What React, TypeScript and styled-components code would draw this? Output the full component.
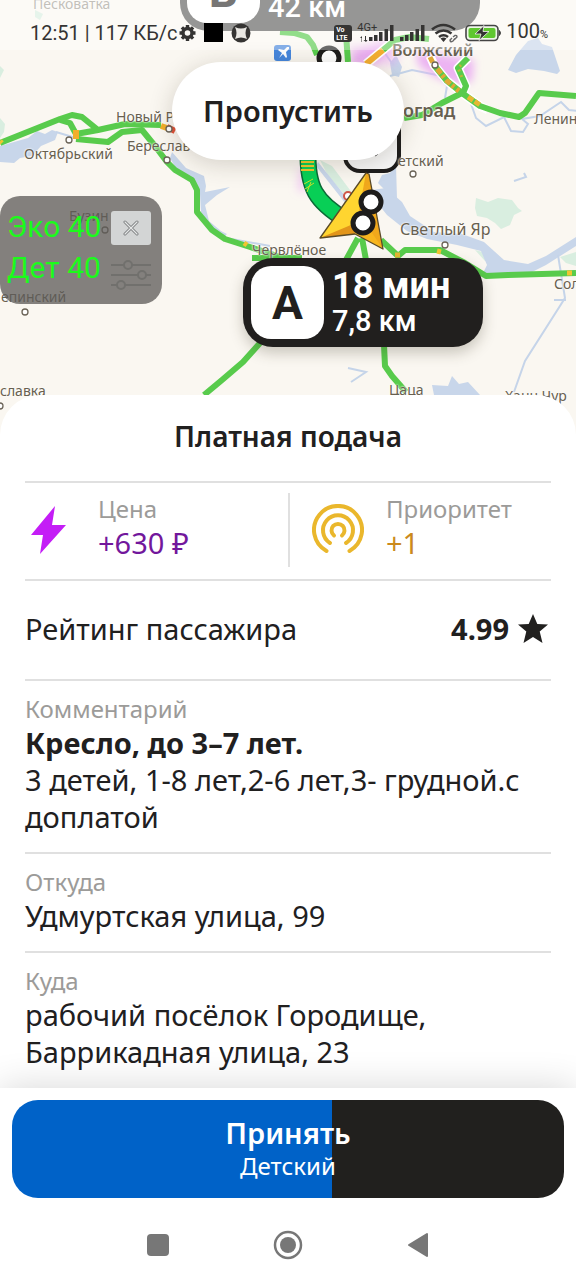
import React from "react";
import styled, { createGlobalStyle } from "styled-components";

const GlobalStyle = createGlobalStyle`
  * { box-sizing: border-box; }
  body { margin: 0; background: #fff; color: #21201f; font-family: "Noto Sans", sans-serif; }
  button { border: 0; margin: 0; padding: 0; background: none; font: inherit; color: inherit; cursor: pointer; }
  h1, p, dl, dt, dd { margin: 0; font-weight: 400; }
  svg { display: block; }
`;

const Screen = styled.main`
  display: flex;
  flex-direction: column;
  min-height: 100vh;
  overflow: hidden;
`;

/* ---------- map ---------- */

const MapArea = styled.section`
  position: relative;
  height: 395px;
`;

const MapDrawing = styled.svg`
  position: absolute;
  top: 0;
  left: 0;
  width: 100%;
  height: 440px;
`;

const Place = styled.span<{ $x: number; $y: number; $size?: number; $bold?: boolean; $color?: string }>`
  position: absolute;
  left: ${(p) => p.$x}px;
  top: ${(p) => p.$y}px;
  font-size: ${(p) => p.$size ?? 14}px;
  line-height: 18px;
  font-weight: ${(p) => (p.$bold ? 600 : 400)};
  color: ${(p) => p.$color ?? "#68604f"};
  white-space: nowrap;
  text-shadow: 0 0 2px #fff, 0 0 2px #fff;
`;

const StatusBar = styled.header`
  position: absolute;
  inset: 0 0 auto;
  display: flex;
  justify-content: space-between;
  align-items: center;
  height: 50px;
  padding: 16px 28px 0 30px;
  background: rgba(255, 255, 255, 0.35);
  color: #353433;
  font: 400 20px/24px Roboto, sans-serif;
`;

const StatusGroup = styled.div<{ $gap: number }>`
  display: flex;
  align-items: center;
  gap: ${(p) => p.$gap}px;
`;

const Percent = styled.small`
  font-size: 11px;
`;

const FarMarker = styled.div`
  position: absolute;
  left: 180px;
  top: -58px;
  display: flex;
  align-items: center;
  gap: 8px;
  width: 300px;
  height: 89px;
  padding: 0 7px;
  border-radius: 28px;
  background: #5f5e5c;
`;

const FarLetter = styled.span`
  display: flex;
  align-items: flex-end;
  justify-content: center;
  width: 73px;
  height: 73px;
  padding-bottom: 9px;
  border-radius: 20px;
  background: #fff;
  color: #2e2d2c;
  font: 700 46px/46px Roboto, sans-serif;
`;

const FarDistance = styled.span`
  align-self: flex-end;
  color: #fff;
  font: 500 29px/32px Roboto, sans-serif;
  padding-bottom: 8px;
`;

const SkipButton = styled.button`
  position: absolute;
  top: 62px;
  left: 50%;
  width: 232px;
  height: 98px;
  padding-bottom: 2px;
  transform: translateX(-50%);
  border-radius: 49px;
  background: #fff;
  box-shadow: 0 4px 24px rgba(60, 50, 30, 0.2);
  font-size: 29px;
  font-weight: 600;
`;

const Widget = styled.aside`
  position: absolute;
  left: 0;
  top: 196px;
  display: flex;
  justify-content: space-between;
  width: 162px;
  height: 108px;
  padding: 10px 11px 8px 7px;
  border-radius: 20px;
  background: rgba(93, 91, 88, 0.76);
`;

const WidgetText = styled.div`
  color: #1bfb1b;
  font: 400 30px/41px Roboto, sans-serif;
  white-space: nowrap;
`;

const WidgetTools = styled.div`
  display: flex;
  flex-direction: column;
  gap: 14px;
  padding-top: 5px;
`;

const CloseButton = styled.button`
  display: grid;
  place-items: center;
  width: 40px;
  height: 34px;
  border-radius: 3px;
  background: #d3d5d5;
`;

const NearMarker = styled.div`
  position: absolute;
  left: 243px;
  top: 258px;
  display: flex;
  align-items: center;
  gap: 8px;
  width: 240px;
  height: 89px;
  padding: 0 8px;
  border-radius: 30px;
  background: #211f1e;
  box-shadow: 0 6px 14px rgba(60, 50, 30, 0.25);
  color: #fff;
  font-family: Roboto, sans-serif;
`;

const NearLetter = styled.span`
  display: grid;
  place-items: center;
  width: 73px;
  height: 73px;
  border-radius: 20px;
  background: #fff;
  color: #211f1e;
  font-size: 46px;
  font-weight: 700;
`;

const Eta = styled.div`
  font-size: 36px;
  font-weight: 700;
  line-height: 36px;
`;

const Distance = styled.div`
  font-size: 29px;
  font-weight: 500;
  line-height: 34px;
`;

/* ---------- order sheet ---------- */

const Sheet = styled.section`
  position: relative;
  flex: 1;
  padding: 0 25px;
  border-radius: 40px 40px 0 0;
  background: #fff;
`;

const Title = styled.h1`
  padding: 21px 0 25px;
  font-size: 28px;
  font-weight: 600;
  line-height: 40px;
  text-align: center;
`;

const Bonuses = styled.dl`
  display: grid;
  grid-template-columns: 1fr 1fr;
  padding: 10px 0 12px;
  border-top: 2px solid #e0e0e0;
`;

const Bonus = styled.div<{ $divided?: boolean }>`
  display: grid;
  grid-template-columns: 52px 1fr;
  column-gap: ${(p) => (p.$divided ? 22 : 21)}px;
  align-items: center;
  height: 74px;
  padding-left: ${(p) => (p.$divided ? 22 : 0)}px;
  border-left: ${(p) => (p.$divided ? "2px solid #e0e0e0" : "0")};
`;

const BonusText = styled.div`
  padding-bottom: 5px;
`;

const Label = styled.dt`
  color: #9c9b99;
  font-size: 24px;
  line-height: 30px;
`;

const BonusValue = styled.dd<{ $color: string }>`
  color: ${(p) => p.$color};
  font-size: 29px;
  line-height: 37px;
`;

const Rating = styled.div`
  display: flex;
  align-items: center;
  justify-content: space-between;
  height: 100px;
  padding: 0 2px 4px 0;
  border-top: 2px solid #e0e0e0;
  font-size: 29px;
`;

const Score = styled.strong`
  display: flex;
  align-items: center;
  gap: 8px;
  font-weight: 700;
`;

const Detail = styled.dl`
  padding: 13px 0 17px;
  border-top: 2px solid #e0e0e0;
`;

const DetailText = styled.dd<{ $strong?: boolean }>`
  font-size: 29px;
  font-weight: ${(p) => (p.$strong ? 700 : 400)};
  line-height: 37px;
`;

const Footer = styled.footer`
  position: relative;
  padding: 12px 12px 0;
  background: #fff;
  box-shadow: 0 0 36px rgba(0, 0, 0, 0.16);
`;

const AcceptButton = styled.button`
  display: flex;
  flex-direction: column;
  align-items: center;
  justify-content: center;
  width: 100%;
  height: 98px;
  border-radius: 26px;
  background: linear-gradient(to right, #0062c8 58%, #21201e 58%);
  color: #fff;
`;

const AcceptTitle = styled.span`
  font-size: 29px;
  font-weight: 600;
  line-height: 34px;
`;

const AcceptTariff = styled.span`
  font-size: 24px;
  line-height: 32px;
`;

const SystemNav = styled.nav`
  display: flex;
  justify-content: center;
  gap: 82px;
  padding: 23px 0 11px;
`;

const NavButton = styled.button`
  display: grid;
  place-items: center;
  width: 48px;
  height: 48px;
`;

/* ---------- drawings ---------- */

function Town({ x, y }: { x: number; y: number }) {
  return <circle cx={x} cy={y} r="3" fill="#fff" stroke="#6b6458" strokeWidth="1.3" />;
}

function RegionMap() {
  return (
    <MapDrawing viewBox="0 0 576 440" preserveAspectRatio="xMinYMin slice" aria-hidden="true">
      <defs>
        <filter id="soft" x="-30%" y="-30%" width="160%" height="160%"><feGaussianBlur stdDeviation="4" /></filter>
      </defs>
      <rect width="576" height="440" fill="#faf7f1" />

      <g fill="#d9eee0">
        <path d="M0 66l4 4-4 8zM0 118l5 6-1 8-4 6zM35 10l8 4-3 6-5-3zM476 198l12 4 10-4 14 2 6 8 4 3-8 4-4 10-9 4-6-6-8-5-10-2-2-8z" />
        <path d="M560 257l16-5v14l-10-3zM475 250l20 5-10 6zM320 160l12 6 24 32-10-2-18-20z" />
      </g>

      <g fill="#c8d6ea">
        <path d="M0 146l28-8 9-7 8 3 7-4 6 2-3 8-14 6-9 10-12 2-6 5-14-1z" />
        <path d="M172 152l14 16 18 8 2 10-1 6 25-5-13 8-12 10 4 16 12 10 6 3-2 2-14-9-10-15-1-18-8-12-14-10-8-14z" />
        <path d="M516 55l12-14 10-3 4 6 10 3 8 24-3 3-13-3-16-2-12 4-8-3z" />
        <path d="M372 190l14-2 16 14 8 14 24 16 28 2 22 8 20 18 24 4 18-8 30-19v9l-30 19-20 10-18-2-14 4-12-2 5-10-6-14-24-6-30-6-20-8-20-16-16-20z" />
        <path d="M396 165l1 34-7-4-12-12 4-8 8-2zM318 162l-2 4 30 38 4-2z" />
        <path d="M432 385l16 1 4-10 7 8 9-2 12 13h-46z" />
        <path d="M396 55l6 12-3 10-7-2-2-12z" />
      </g>
      <g fill="none" stroke="#c5d4e9" strokeWidth="2">
        <path d="M384 52l10 14M390 76l22-6 30 6M440 78l7 8-2 12M470 101l6 17 10 8 18-9 7 14 12 1 5-8-6-5 18-3 21-14 8 8 17 2" />
        <path d="M56 132l20 6M226 238l44 8M558 255l7 43-40 63-11 31M554 300h12M348 368l18 4-15 10M514 181l12-4-2-4" />
      </g>

      <g filter="url(#soft)" fill="#e9a2f2">
        <path d="M350 55l30-14 10 4-12 18-26 6zM416 50l58 10-2 22-20 2-20-9-14-10z" opacity=".8" />
        <path d="M300 165l10 10-5 18-8-3zM345 45h60l-10 20h-30z" opacity=".45" />
      </g>

      <g fill="none" stroke="#fff" strokeWidth="9" strokeLinejoin="round">
        <path d="M366 64l17-14 12-10M430 56l4 9 13 16 15 12 18 13 8 4M468 58l-10 10 8 18-3 7" />
      </g>
      <g fill="none" stroke="#58cb4c" strokeWidth="6" strokeLinejoin="round">
        <path d="M0 143l60-24 12-4 10 2 16 13 27-6 36 1" />
        <path d="M60 120l10 3 6 11 22-4M76 139l32 3 14-10 20-2 13 16 12 16 8 8 17 10 5 10v22l15 18 13 9 25 8 45 15" />
        <path d="M260 343l-17 19-21 18-18 15M384 345l1 21 7 10 14 16M358 238l-12 22M362 238l4 22M381 240l17 16 7-6h35l25 13 21 13 22-1 68-2" />
        <path d="M280 32l14 1 13 4 6 8 4 10M348 62l-2-28 6-16M383 50l12-10 14-3 20 2M468 58l-10 10 8 18-3 7M404 118l18-3 20-12 20-10M434 65l13 16 15 12 18 13 20 7 19 4 6-4 14-20 37 3" />
        <path d="M252 258h50" />
      </g>
      <g fill="none" strokeWidth="5">
        <path d="M76 130v9M161 126l6 2" stroke="#f2ae2a" strokeWidth="6" />
        <path d="M167 127l8 4" stroke="#df5138" strokeWidth="6" />
        <path d="M366 64l17-14" stroke="#f3ae31" strokeWidth="6" />
        <path d="M430 57l4 8 13 16 12 10" stroke="#dfa836" strokeDasharray="6 2 3 3" />
        <path d="M468 97l12 8M395 255h5" stroke="#e5b833" strokeDasharray="6 2" />
        <path d="M461 65l-3 3 5 12" stroke="#b9b93a" strokeWidth="3" strokeDasharray="2 4" />
        <path d="M0 141l2 2M244 243l3 2M437 251l4 1M567 273h5" stroke="#f0c531" />
      </g>

      <g fill="none" strokeLinejoin="round">
        <path d="M308 150c-1 38 8 52 38 70" stroke="#0b6a36" strokeWidth="17" />
        <path d="M308 150c-1 38 8 52 38 70" stroke="#08cf56" strokeWidth="14" />
        <path d="M301 162h13M301 166h13M301 170h13" stroke="#f2c62a" strokeWidth="2" />
        <path d="M304 184l9-5M305 189l9-6M307 192l4-10" stroke="#c9df2a" strokeWidth="1" />
      </g>

      <Town x={69} y={140} />
      <Town x={169} y={129} />
      <Town x={167} y={160} />
      <Town x={105} y={230} />
      <Town x={25} y={312} />
      <Town x={413} y={174} />
      <Town x={445} y={245} />
      <Town x={435} y={65} />
      <Town x={0} y={406} />

      <rect x="274" y="45" width="17" height="16" rx="3" fill="#4586dd" />
      <path d="M279 58l3-5-4-3 1-1 5 1 3-3 2 0 0 2-3 3 1 5-1 1-3-4-3 3z" fill="#fff" />

      <circle cx="329" cy="58" r="10" fill="#fff" stroke="#1d1c1b" strokeWidth="5" />
      <rect x="345" y="108" width="54" height="63" rx="15" fill="#f6f6f6" stroke="#1d1c1b" strokeWidth="4" />
      <path d="M374 154h4l-3 2" fill="#222" stroke="#222" />
      <circle cx="348" cy="196" r="4" fill="#fff" stroke="#cf5548" strokeWidth="2" />
    </MapDrawing>
  );
}

const CarLayer = styled.svg`
  position: absolute;
  left: 316px;
  top: 168px;
`;

function Car() {
  return (
    <CarLayer width="72" height="86" viewBox="316 168 72 86" aria-hidden="true">
      <path d="M366 173l-46 65 32-4 16-32z" fill="#ffd530" />
      <path d="M320 238l38-16-3 12z" fill="#e2951a" />
      <path d="M366 173l3 1 14 75-28-16z" fill="#f0a81c" />
      <path d="M354 233l14-6 15 22z" fill="#f8b61e" />
      <path d="M366 173l-46 65 35-4 28 15-14-75z" fill="none" stroke="#5a4a27" strokeWidth="1.3" strokeLinejoin="round" />
      <circle cx="371" cy="202" r="10" fill="#fff" stroke="#1d1c1b" strokeWidth="5" />
      <circle cx="363" cy="223" r="10" fill="#fff" stroke="#1d1c1b" strokeWidth="5" />
    </CarLayer>
  );
}

function StatusLeftIcons() {
  return (
    <svg width="72" height="20" viewBox="0 0 72 20" aria-hidden="true">
      <g stroke="#353433" fill="none">
        <circle cx="8.500" cy="10" r="4.500" strokeWidth="3.400" />
        <path d="M8.500 2v3M8.500 15v3M.5 10h3M13.500 10h3M2.900 4.400l2 2M12.100 13.600l2 2M14.100 4.400l-2 2M4.900 13.600l-2 2" strokeWidth="3.400" />
      </g>
      <path d="M25 0h19v19H25z" fill="#000" />
      <circle cx="62" cy="10" r="9.500" fill="#353433" />
      <path d="M56 4q6 3 12 0-3 6 0 12-6-3-12 0 3-6 0-12z" fill="#e9e7e3" />
    </svg>
  );
}

function Bars() {
  return (
    <svg width="25" height="18" viewBox="0 0 25 18" aria-hidden="true">
      <path d="M0 13h3.500v4H0zM5 11h3.500v6H5zM10 8h3.500v9H10zM15.500 5H19v12h-3.500zM21 1h3.500v16H21z" fill="#353433" />
    </svg>
  );
}

function DataArrows() {
  return (
    <svg width="9" height="6" viewBox="0 0 9 6" aria-hidden="true">
      <path d="M2.500 6V2H1l2-2v6zM6 0v4H4.500L7 6l1.500-2H7V0z" fill="#353433" />
    </svg>
  );
}

const Network = styled.div`
  display: flex;
  align-items: flex-end;
  gap: 1px;
  position: relative;
  padding-left: 3px;
`;

const NetworkType = styled.span`
  position: absolute;
  left: 1px;
  top: -2px;
  font: 400 11px/11px Roboto, sans-serif;
`;

const Volte = styled.span`
  width: 18px;
  height: 17px;
  padding: 1px 1px 0 2px;
  border-radius: 3px;
  background: #353433;
  color: #fff;
  font: 700 7px/8px Roboto, sans-serif;
`;

function Wifi() {
  return (
    <svg width="28" height="20" viewBox="0 0 28 20" aria-hidden="true">
      <g fill="none" stroke="#353433" strokeWidth="2.600">
        <path d="M1 6.500q11-9 23 0M4.500 10.500q8-6 16 0M8 14q4.500-3.500 9 0" />
      </g>
      <path d="M9.500 15.500q3-2 6 0l-3 3.500z" fill="#353433" />
      <path d="M20 17.500l-1 1M22 14l2-1.500q2-.5 2 1.500l-2.500 2.500M24 15.500l-2 2.500q-3 2-3-1l2-2" fill="none" stroke="#666" strokeWidth="1.400" />
    </svg>
  );
}

function Battery() {
  return (
    <svg width="38" height="18" viewBox="0 0 38 18" aria-hidden="true">
      <rect x="1" y="1.500" width="32" height="15" rx="4" fill="#eef6e8" stroke="#444" strokeWidth="1.600" />
      <rect x="3.500" y="4" width="27" height="10" rx="2" fill="#5fc72f" />
      <path d="M34.500 6.500q2 2.500 0 5z" fill="#444" stroke="#444" />
      <path d="M19 1.500l-9 8.500h6l-2 6.500 10-9h-6z" fill="#353433" stroke="#f4f4f0" strokeWidth=".8" />
    </svg>
  );
}

function CloseCross() {
  return (
    <svg width="16" height="16" viewBox="0 0 16 16" aria-hidden="true">
      <path d="M2 2l12 12M14 2L2 14" stroke="#77797a" strokeWidth="3" strokeLinecap="round" />
      <path d="M2 2l12 12M14 2L2 14" stroke="#e6e8e8" strokeWidth="1.300" strokeLinecap="round" />
    </svg>
  );
}

function Sliders() {
  return (
    <svg width="40" height="32" viewBox="0 0 40 32" fill="none" stroke="#71706d" strokeWidth="2" aria-hidden="true">
      <path d="M0 6h13M21 6h19M0 16h27M35 16h5M0 26h6M14 26h26" />
      <circle cx="17" cy="6" r="4" /><circle cx="31" cy="16" r="4" /><circle cx="10" cy="26" r="4" />
    </svg>
  );
}

function Bolt() {
  return (
    <svg width="52" height="52" viewBox="0 0 52 52" aria-hidden="true">
      <path d="M30 2L6 31h12l-3 19 26-29H27z" fill="#c41df6" />
    </svg>
  );
}

function Waves() {
  return (
    <svg width="52" height="52" viewBox="0 0 52 52" fill="none" stroke="#eab72c" strokeWidth="4" strokeLinecap="round" aria-hidden="true">
      <path d="M14.500 47a24 24 0 1 1 23 0" />
      <path d="M18 39a15 15 0 1 1 16 0" />
      <path d="M22 31.500a6.500 6.500 0 1 1 8 0" />
    </svg>
  );
}

function Star() {
  return (
    <svg width="32" height="32" viewBox="0 0 32 32" aria-hidden="true">
      <path d="M16 2l4.300 10L31 12.500l-8.300 7L25.500 31 16 25 6.500 31l2.800-11.500L1 12.500l10.700-.5z" fill="#21201f" />
    </svg>
  );
}

const details = [
  { label: "Комментарий", strong: "Кресло, до 3–7 лет.", text: "3 детей, 1-8 лет,2-6 лет,3- грудной.с доплатой" },
  { label: "Откуда", text: "Удмуртская улица, 99" },
  { label: "Куда", text: "рабочий посёлок Городище, Баррикадная улица, 23" },
];

export default function App() {
  return (
    <Screen>
      <GlobalStyle />
      <MapArea>
        <RegionMap />
        <Place $x={33} $y={-5} $color="#a39f96">Песковатка</Place>
        <Place $x={116} $y={108}>Новый Р</Place>
        <Place $x={24} $y={145}>Октябрьский</Place>
        <Place $x={127} $y={137}>Береслав</Place>
        <Place $x={69} $y={207}>Бузин</Place>
        <Place $x={1} $y={288}>епинский</Place>
        <Place $x={0} $y={382}>славка</Place>
        <Place $x={252} $y={241}>Червлёное</Place>
        <Place $x={389} $y={381}>Цаца</Place>
        <Place $x={392} $y={41} $size={16} $bold>Волжский</Place>
        <Place $x={403} $y={101} $size={18} $bold>оград</Place>
        <Place $x={534} $y={110}>Ленинск</Place>
        <Place $x={398} $y={152}>етский</Place>
        <Place $x={400} $y={220} $size={16}>Светлый Яр</Place>
        <Place $x={554} $y={275}>Солёное</Place>
        <Place $x={505} $y={387}>Ханн Чур</Place>
        <Car />
        <FarMarker>
          <FarLetter>B</FarLetter>
          <FarDistance>42 км</FarDistance>
        </FarMarker>
        <StatusBar>
          <StatusGroup $gap={2}>
            <span>12:51 | 117 КБ/с</span>
            <StatusLeftIcons />
          </StatusGroup>
          <StatusGroup $gap={6}>
            <StatusGroup $gap={4}>
              <Volte>Vo LTE</Volte>
              <Network><NetworkType>4G+</NetworkType><DataArrows /><Bars /></Network>
            </StatusGroup>
            <Bars />
            <Wifi />
            <StatusGroup $gap={3}>
              <Battery />
              <span>100<Percent>%</Percent></span>
            </StatusGroup>
          </StatusGroup>
        </StatusBar>
        <SkipButton type="button">Пропустить</SkipButton>
        <Widget>
          <WidgetText>
            <div>Эко 40</div>
            <div>Дет 40</div>
          </WidgetText>
          <WidgetTools>
            <CloseButton type="button" aria-label="Закрыть"><CloseCross /></CloseButton>
            <Sliders />
          </WidgetTools>
        </Widget>
        <NearMarker>
          <NearLetter>A</NearLetter>
          <div>
            <Eta>18 мин</Eta>
            <Distance>7,8 км</Distance>
          </div>
        </NearMarker>
      </MapArea>

      <Sheet>
        <Title>Платная подача</Title>
        <Bonuses>
          <Bonus>
            <Bolt />
            <BonusText><Label>Цена</Label><BonusValue $color="#72179c">+630 ₽</BonusValue></BonusText>
          </Bonus>
          <Bonus $divided>
            <Waves />
            <BonusText><Label>Приоритет</Label><BonusValue $color="#cb8a1c">+1</BonusValue></BonusText>
          </Bonus>
        </Bonuses>
        <Rating>
          <span>Рейтинг пассажира</span>
          <Score>4.99 <Star /></Score>
        </Rating>
        {details.map((d) => (
          <Detail key={d.label}>
            <Label>{d.label}</Label>
            {d.strong && <DetailText $strong>{d.strong}</DetailText>}
            <DetailText>{d.text}</DetailText>
          </Detail>
        ))}
      </Sheet>

      <Footer>
        <AcceptButton type="button">
          <AcceptTitle>Принять</AcceptTitle>
          <AcceptTariff>Детский</AcceptTariff>
        </AcceptButton>
        <SystemNav>
          <NavButton type="button" aria-label="Недавние">
            <svg width="22" height="22"><rect width="22" height="22" rx="4" fill="#777" /></svg>
          </NavButton>
          <NavButton type="button" aria-label="Домой">
            <svg width="30" height="30"><circle cx="15" cy="15" r="13" fill="none" stroke="#777" strokeWidth="2.500" /><circle cx="15" cy="15" r="8" fill="#777" /></svg>
          </NavButton>
          <NavButton type="button" aria-label="Назад">
            <svg width="22" height="26"><path d="M20 2v22L2 13z" fill="#777" stroke="#777" strokeWidth="2" strokeLinejoin="round" /></svg>
          </NavButton>
        </SystemNav>
      </Footer>
    </Screen>
  );
}
